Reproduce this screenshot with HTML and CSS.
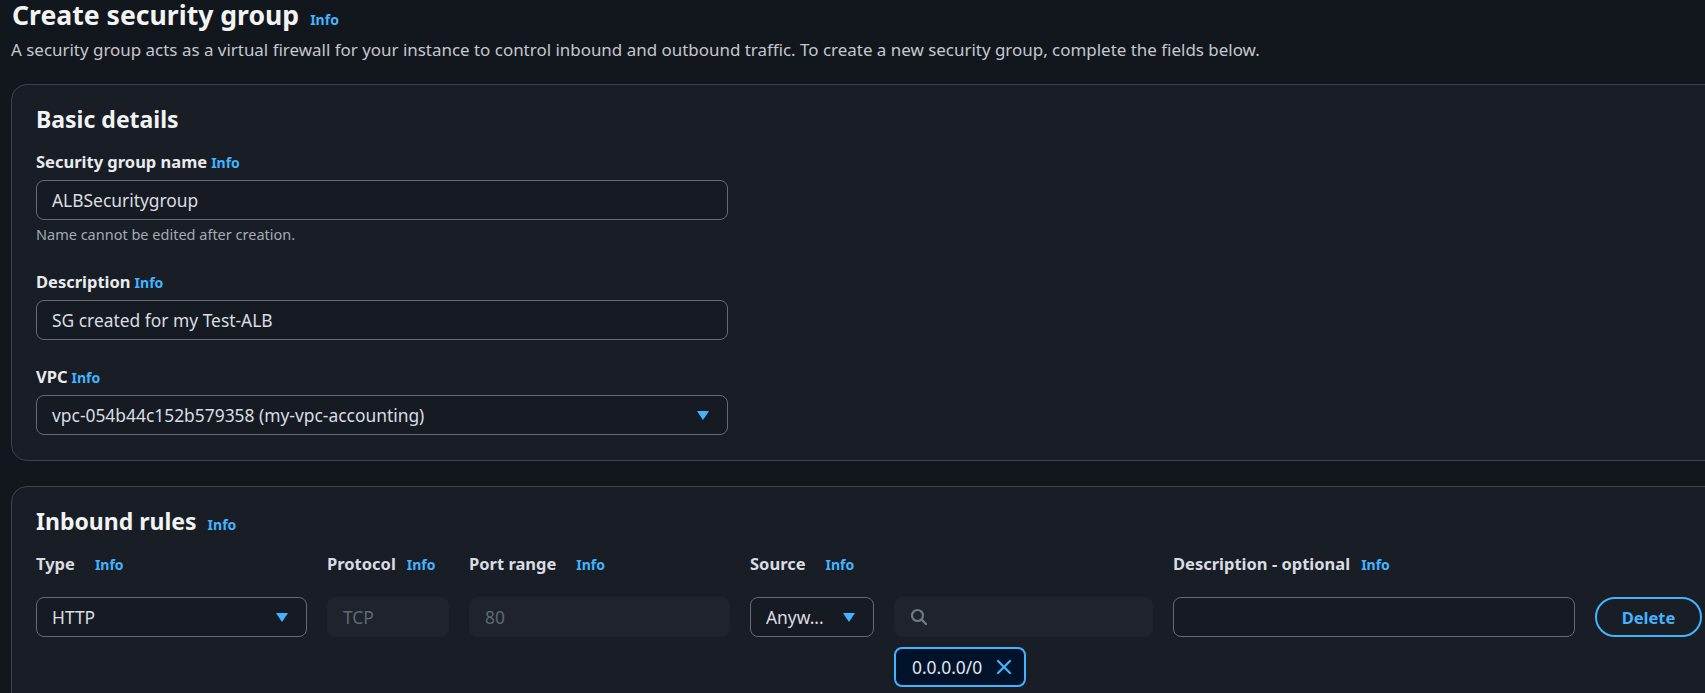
FILE: index.html
```html
<!DOCTYPE html>
<html lang="en">
<head>
<meta charset="utf-8">
<title>Create security group</title>
<link rel="stylesheet" href="styles.css">
</head>
<body>
<div class="page">
  <header class="page-header">
    <h1 class="title">Create security group <a class="info info-title">Info</a></h1>
    <p class="lead">A security group acts as a virtual firewall for your instance to control inbound and outbound traffic. To create a new security group, complete the fields below.</p>
  </header>

  <section class="card card-basic">
    <h2 class="card-title">Basic details</h2>

    <div class="field field-name">
      <div class="label">Security group name <a class="info">Info</a></div>
      <div class="input">ALBSecuritygroup</div>
      <div class="hint">Name cannot be edited after creation.</div>
    </div>

    <div class="field field-desc">
      <div class="label">Description <a class="info">Info</a></div>
      <div class="input">SG created for my Test-ALB</div>
    </div>

    <div class="field field-vpc">
      <div class="label">VPC <a class="info">Info</a></div>
      <div class="input select">
        <span>vpc-054b44c152b579358 (my-vpc-accounting)</span>
        <span class="caret"></span>
      </div>
    </div>
  </section>

  <section class="card card-inbound">
    <h2 class="card-title">Inbound rules <a class="info info-heading">Info</a></h2>

    <div class="rules">
      <div class="col-label">Type <a class="info info-wide">Info</a></div>
      <div class="col-label">Protocol <a class="info info-narrow">Info</a></div>
      <div class="col-label">Port range <a class="info info-wide">Info</a></div>
      <div class="col-label">Source <a class="info info-wide">Info</a></div>
      <div class="col-label"></div>
      <div class="col-label">Description - optional <a class="info info-narrow">Info</a></div>
      <div class="col-label"></div>

      <div class="input select"><span>HTTP</span><span class="caret"></span></div>
      <div class="input disabled">TCP</div>
      <div class="input disabled">80</div>
      <div class="input select"><span>Anyw...</span><span class="caret"></span></div>
      <div class="input disabled search">
        <svg class="search-icon" width="18" height="18" viewBox="0 0 18 18" aria-hidden="true">
          <circle cx="7.5" cy="7.5" r="5.5" fill="none" stroke="#6f7883" stroke-width="2.2"/>
          <path d="M11.6 11.6 L16 16" stroke="#6f7883" stroke-width="2.4" stroke-linecap="round"/>
        </svg>
      </div>
      <div class="input"></div>
      <button class="btn-delete">Delete</button>

      <div class="token-cell">
        <span class="token">0.0.0.0/0
          <svg class="token-x" width="16" height="16" viewBox="0 0 16 16" aria-hidden="true">
            <path d="M2 2 L14 14 M14 2 L2 14" stroke="#42b4ff" stroke-width="2.2" stroke-linecap="round"/>
          </svg>
        </span>
      </div>
    </div>
  </section>
</div>
</body>
</html>
```

FILE: styles.css
```css
html, body {
  margin: 0;
  padding: 0;
  background: #12171e;
  overflow: hidden;
}

body {
  font-family: "Noto Sans", "Open Sans", sans-serif;
  color: #e9ebed;
  font-size: 16px;
  width: 1705px;
  height: 693px;
}

.page {
  padding-left: 11px;
  width: 1760px;
}

.title {
  margin: 0;
  padding-left: 1px;
  font-size: 26.6px;
  line-height: 31px;
  font-weight: 700;
  color: #f2f3f3;
  display: flex;
  align-items: baseline;
}

.info {
  color: #42b4ff;
  font-size: 14px;
  line-height: 16px;
  font-weight: 700;
  text-decoration: none;
  margin-left: 4px;
}

.info-title { margin-left: 11px; }
.info-heading { margin-left: 11px; }
.info-wide { margin-left: 20px; }
.info-narrow { margin-left: 11px; }

.lead {
  margin: 9px 0 0 0;
  font-size: 16.95px;
  line-height: 20px;
  color: #c6c6cd;
}

.card {
  background: #181d26;
  border: 1px solid #3d434d;
  border-radius: 16px;
  padding: 19px 24px 24px 24px;
  box-sizing: border-box;
}

.card-basic {
  margin-top: 24px;
  height: 377px;
}

.card-inbound {
  margin-top: 25px;
  padding-top: 19px;
  height: 260px;
}

.card-title {
  margin: 0;
  font-size: 23px;
  line-height: 30px;
  font-weight: 700;
  color: #f2f3f3;
  display: flex;
  align-items: baseline;
}

.field {
  width: 692px;
}

.field-name { margin-top: 18px; }
.field-desc { margin-top: 29px; }
.field-vpc { margin-top: 27px; }

.label {
  font-size: 16.5px;
  line-height: 20px;
  font-weight: 700;
  color: #e9ebed;
  display: flex;
  align-items: baseline;
}

.field .input {
  margin-top: 8px;
}

.input {
  box-sizing: border-box;
  height: 40px;
  border: 1px solid #656a73;
  border-radius: 8px;
  background: #161b23;
  padding: 0 18px 0 15px;
  display: flex;
  align-items: center;
  font-size: 17.4px;
  color: #dadde2;
}

.select {
  justify-content: space-between;
}

.caret {
  width: 0;
  height: 0;
  border-left: 6px solid transparent;
  border-right: 6px solid transparent;
  border-top: 9px solid #42b4ff;
}

.hint {
  margin-top: 5px;
  font-size: 14.5px;
  line-height: 18px;
  color: #a4abb5;
}

.rules {
  margin-top: 18px;
  display: grid;
  grid-template-columns: 271px 122px 261px 124px 259px 402px 107px;
  column-gap: 20px;
  align-items: center;
}

.col-label {
  font-size: 16.5px;
  line-height: 20px;
  font-weight: 700;
  color: #d9dce0;
  display: flex;
  align-items: baseline;
  margin-bottom: 23px;
}

.disabled {
  background: #1f242c;
  border-color: #1f242c;
  color: #5f6873;
}

.search {
  padding-left: 15px;
}

.search-icon {
  display: block;
}

.btn-delete {
  box-sizing: border-box;
  height: 40px;
  border: 2px solid #42b4ff;
  border-radius: 20px;
  background: transparent;
  color: #42b4ff;
  font-family: "Noto Sans", "Open Sans", sans-serif;
  font-size: 16.5px;
  font-weight: 700;
  padding: 0;
}

.token-cell {
  grid-column: 5;
  margin-top: 10px;
}

.token {
  box-sizing: border-box;
  display: inline-flex;
  align-items: center;
  gap: 14px;
  height: 40px;
  padding: 0 12px 0 16px;
  border: 2px solid #42b4ff;
  border-radius: 8px;
  background: #00132b;
  color: #e4e6ea;
  font-size: 17.4px;
}

.token-x {
  display: block;
}
```
